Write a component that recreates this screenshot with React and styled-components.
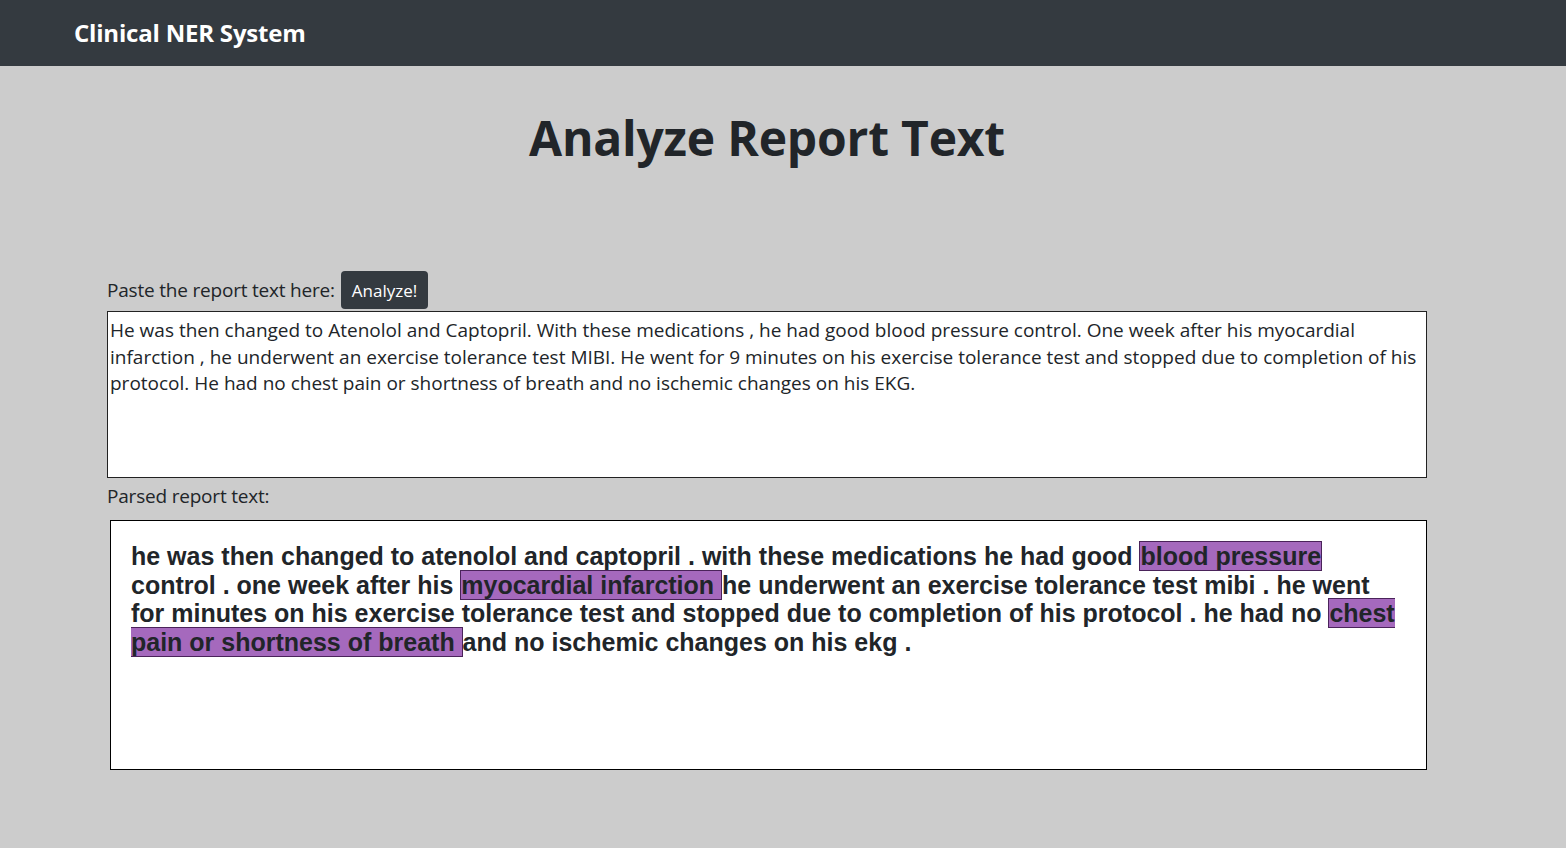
import React from "react";
import styled, { createGlobalStyle } from "styled-components";

const GlobalStyle = createGlobalStyle`
  body {
    margin: 0;
    background-color: #cccccc;
    font-family: "Open Sans", "Noto Sans", sans-serif;
    color: #212529;
  }
`;

const NavBar = styled.nav`
  height: 66px;
  background-color: #343a40;
  display: flex;
  align-items: center;
  padding-left: 74px;
`;

const Brand = styled.div`
  color: #ffffff;
  font-size: 24px;
  font-weight: 700;
  letter-spacing: -0.2px;
  margin-top: -1px;
`;

const Main = styled.main`
  width: 1320px;
  margin-left: 107px;
  display: flex;
  flex-direction: column;
`;

const Title = styled.h1`
  margin: 40px 0 0;
  text-align: center;
  font-size: 48px;
  font-weight: 700;
  line-height: 64px;
  letter-spacing: -0.2px;
`;

const InputRow = styled.div`
  margin-top: 99px;
  display: flex;
  align-items: center;
  gap: 6px;
  height: 42px;
`;

const Label = styled.label`
  font-size: 19px;
  letter-spacing: -0.2px;
`;

const Button = styled.button`
  background-color: #343a40;
  color: #ffffff;
  border: none;
  border-radius: 4px;
  height: 38px;
  padding: 0 11px;
  font-family: inherit;
  font-size: 17px;
  cursor: pointer;
`;

const ReportInput = styled.textarea`
  box-sizing: border-box;
  width: 1320px;
  height: 167px;
  margin: 0;
  padding: 5px 2px;
  border: 1px solid #222;
  background: #ffffff;
  color: #212529;
  font-family: "Open Sans", "Noto Sans", sans-serif;
  font-size: 19px;
  line-height: 26.5px;
  resize: none;
  outline: none;
`;

const ParsedLabel = styled.div`
  margin-top: 4px;
  font-size: 19px;
  letter-spacing: -0.2px;
  line-height: 28px;
`;

const ParsedBox = styled.div`
  box-sizing: border-box;
  margin: 10px 0 0 3px;
  width: 1317px;
  height: 250px;
  background: #ffffff;
  border: 1px solid #000;
  padding: 21px 20px;
  font-family: "Liberation Sans", Arial, sans-serif;
  font-weight: 700;
  font-size: 25px;
  line-height: 28.6px;
  color: #212529;
`;

const Entity = styled.span`
  background-color: #a569bd;
  border: 1px solid #4a235a;
`;

const reportText =
  "He was then changed to Atenolol and Captopril. With these medications , he had good blood pressure control. One week after his myocardial infarction , he underwent an exercise tolerance test MIBI. He went for 9 minutes on his exercise tolerance test and stopped due to completion of his protocol. He had no chest pain or shortness of breath and no ischemic changes on his EKG.";

const parsed = [
  { text: "he was then changed to atenolol and captopril . with these medications he had good " },
  { text: "blood pressure", entity: true },
  { text: " control . one week after his " },
  { text: "myocardial infarction ", entity: true },
  { text: "he underwent an exercise tolerance test mibi . he went for minutes on his exercise tolerance test and stopped due to completion of his protocol . he had no " },
  { text: "chest pain or shortness of breath ", entity: true },
  { text: "and no ischemic changes on his ekg ." },
];

export default function App() {
  return (
    <>
      <GlobalStyle />
      <NavBar>
        <Brand>Clinical NER System</Brand>
      </NavBar>
      <Main>
        <Title>Analyze Report Text</Title>
        <InputRow>
          <Label>Paste the report text here:</Label>
          <Button>Analyze!</Button>
        </InputRow>
        <ReportInput defaultValue={reportText} spellCheck={false} />
        <ParsedLabel>Parsed report text:</ParsedLabel>
        <ParsedBox>
          {parsed.map((p, i) =>
            p.entity ? <Entity key={i}>{p.text}</Entity> : <span key={i}>{p.text}</span>
          )}
        </ParsedBox>
      </Main>
    </>
  );
}
